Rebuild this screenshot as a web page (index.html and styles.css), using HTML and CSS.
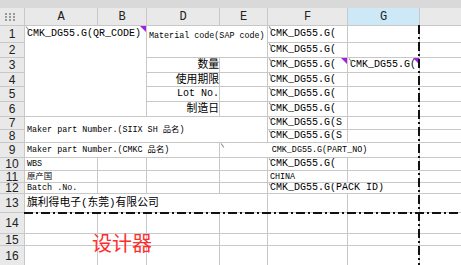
FILE: index.html
```html
<!DOCTYPE html>
<html lang="zh-CN">
<head>
	<meta charset="UTF-8">
	<title>设计器</title>
	<link rel="stylesheet" href="styles.css">
</head>
<body>
<div class="page">
	<div class="band"></div>
	<div class="sheet">
		<!-- 列头 -->
		<div class="corner">
			<svg width="10" height="8" viewBox="0 0 10 8">
				<g fill="#9a9a9a">
					<rect x="0" y="0" width="2" height="2"/><rect x="4" y="0" width="2" height="2"/><rect x="8" y="0" width="2" height="2"/>
					<rect x="0" y="3" width="2" height="2"/><rect x="4" y="3" width="2" height="2"/><rect x="8" y="3" width="2" height="2"/>
					<rect x="0" y="6" width="2" height="2"/><rect x="4" y="6" width="2" height="2"/><rect x="8" y="6" width="2" height="2"/>
				</g>
			</svg>
		</div>
		<div class="ch">A</div>
		<div class="ch">B</div>
		<div class="ch">D</div>
		<div class="ch">E</div>
		<div class="ch">F</div>
		<div class="ch sel">G</div>
		<div class="ch">H</div>

		<!-- 1 -->
		<div class="rh">1</div>
		<div class="c top mk tri c2 r6">CMK_DG55.G(QR_CODE)</div>
		<div class="c sm mat c2 r2">Material code(SAP code)</div>
		<div class="c mk">CMK_DG55.G(</div>
		<div class="c"></div>
		<div class="c"></div>

		<!-- 2 -->
		<div class="rh">2</div>
		<div class="c mk">CMK_DG55.G(</div>
		<div class="c"></div>
		<div class="c"></div>

		<!-- 3 -->
		<div class="rh">3</div>
		<div class="c zh r">数量</div>
		<div class="c"></div>
		<div class="c mk tri">CMK_DG55.G(</div>
		<div class="c mk tri">CMK_DG55.G(</div>
		<div class="c"></div>

		<!-- 4 -->
		<div class="rh">4</div>
		<div class="c zh r">使用期限</div>
		<div class="c"></div>
		<div class="c mk">CMK_DG55.G(</div>
		<div class="c"></div>
		<div class="c"></div>

		<!-- 5 -->
		<div class="rh">5</div>
		<div class="c r">Lot No.</div>
		<div class="c"></div>
		<div class="c mk">CMK_DG55.G(</div>
		<div class="c"></div>
		<div class="c"></div>

		<!-- 6 -->
		<div class="rh">6</div>
		<div class="c zh r">制造日</div>
		<div class="c"></div>
		<div class="c mk">CMK_DG55.G(</div>
		<div class="c"></div>
		<div class="c"></div>

		<!-- 7 -->
		<div class="rh">7</div>
		<div class="c sm c4 r2">Maker part Number.(SIIX SH 品名)</div>
		<div class="c mk">CMK_DG55.G(S</div>
		<div class="c"></div>
		<div class="c"></div>

		<!-- 8 -->
		<div class="rh">8</div>
		<div class="c mk">CMK_DG55.G(S</div>
		<div class="c"></div>
		<div class="c"></div>

		<!-- 9 -->
		<div class="rh">9</div>
		<div class="c sm c3">Maker part Number.(CMKC 品名)</div>
		<div class="c sm mk ctr c3">CMK_DG55.G(PART_NO)</div>
		<div class="c"></div>

		<!-- 10 -->
		<div class="rh">10</div>
		<div class="c sm">WBS</div>
		<div class="c"></div>
		<div class="c"></div>
		<div class="c"></div>
		<div class="c mk low">CMK_DG55.G(</div>
		<div class="c"></div>
		<div class="c"></div>

		<!-- 11 -->
		<div class="rh">11</div>
		<div class="c sm">原产国</div>
		<div class="c"></div>
		<div class="c"></div>
		<div class="c"></div>
		<div class="c sm">CHINA</div>
		<div class="c"></div>
		<div class="c"></div>

		<!-- 12 -->
		<div class="rh">12</div>
		<div class="c sm">Batch .No.</div>
		<div class="c"></div>
		<div class="c"></div>
		<div class="c"></div>
		<div class="c mk c2">CMK_DG55.G(PACK ID)</div>
		<div class="c"></div>

		<!-- 13 -->
		<div class="rh">13</div>
		<div class="c zh c4">旗利得电子(东莞)有限公司</div>
		<div class="c"></div>
		<div class="c"></div>
		<div class="c"></div>

		<!-- 14 -->
		<div class="rh">14</div>
		<div class="c"></div><div class="c"></div><div class="c"></div><div class="c"></div>
		<div class="c"></div><div class="c"></div><div class="c"></div>

		<!-- 15 -->
		<div class="rh">15</div>
		<div class="c"></div><div class="c"></div><div class="c"></div><div class="c"></div>
		<div class="c"></div><div class="c"></div><div class="c"></div>

		<!-- 16 -->
		<div class="rh">16</div>
		<div class="c"></div><div class="c"></div><div class="c"></div><div class="c"></div>
		<div class="c"></div><div class="c"></div><div class="c"></div>
	</div>

	<!-- 分页线 -->
	<div class="pb-v"></div>
	<div class="pb-h"></div>

	<div class="stamp">设计器</div>
</div>
</body>
</html>
```

FILE: styles.css
```css
html,body{
	margin: 0;padding: 0;
	overflow: hidden;
	background: #fff;
}
body{
	font-family: "Liberation Mono", "Noto Sans CJK SC", monospace;
	color: #000;
}
.page{
	position: relative;
	width: 461px;
	height: 265px;
	overflow: hidden;
}
.band{
	height: 8px;
	background: #d9d9d9;
}
.sheet{
	display: grid;
	grid-template-columns: 24px 72px 48px 72px 47px 79px 71px 100px;
	grid-template-rows: 17px 16px 14px 14px 13px 14px 14px 12px 12px 14px 12px 11px 10px 18px 20px 11px 20px;
	gap: 1px;
	width: max-content;
	background: #c8c8c8;
}
.corner,.ch,.rh{
	display: flex;
	align-items: center;
	justify-content: center;
	background: #e9e9e9;
	color: #222;
}
.corner{
	align-items: flex-start;
	justify-content: flex-start;
	padding: 5px 0 0 5px;
}
.ch{
	font: 12px "Liberation Mono", monospace;
}
.ch.sel{
	background: #cde9f7;
}
.rh{
	font: 12px/10px "Liberation Sans", sans-serif;
}
.c{
	position: relative;
	display: flex;
	align-items: center;
	min-width: 0;
	padding: 0 2px;
	overflow: hidden;
	white-space: nowrap;
	background: #fff;
	font-size: 10px;
	line-height: 12px;
}
.sm{
	font-size: 8.4px;
	line-height: 10px;
}
.zh{
	font-size: 10.8px;
}
.r{
	justify-content: flex-end;
	padding-right: 0;
}
.ctr{
	justify-content: center;
}
.top{
	align-items: flex-start;
	line-height: 16px;
}
.mat{
	align-items: flex-start;
	padding-top: 5px;
	line-height: 10px;
}
.low{
	align-items: flex-end;
}
.c2{ grid-column: span 2; }
.c3{ grid-column: span 3; }
.c4{ grid-column: span 4; }
.r2{ grid-row: span 2; }
.r6{ grid-row: span 6; }

/* 单元格左上角小箭头 */
.mk::before{
	content: "";
	position: absolute;
	left: 2px;
	top: 0;
	width: 1px;
	height: 5px;
	background: #8c8c8c;
	transform: rotate(-35deg);
}
/* 右上角紫色三角 */
.tri::after{
	content: "";
	position: absolute;
	right: 0;
	top: 0;
	border-top: 6px solid #a41ee8;
	border-left: 6px solid transparent;
}

.pb-v{
	position: absolute;
	left: 418px;
	top: 25px;
	bottom: 0;
	width: 2px;
	background: repeating-linear-gradient(to bottom, #111 0 9px, transparent 9px 12px, #111 12px 14px, transparent 14px 17px);
}
.pb-h{
	position: absolute;
	left: 24px;
	right: 0;
	top: 212px;
	height: 2px;
	background: repeating-linear-gradient(to right, #111 0 9px, transparent 9px 12px, #111 12px 14px, transparent 14px 17px);
}
.stamp{
	position: absolute;
	left: 92px;
	top: 233px;
	font: 20px/20px "Noto Sans CJK SC", sans-serif;
	color: #ff2d2d;
}
```
